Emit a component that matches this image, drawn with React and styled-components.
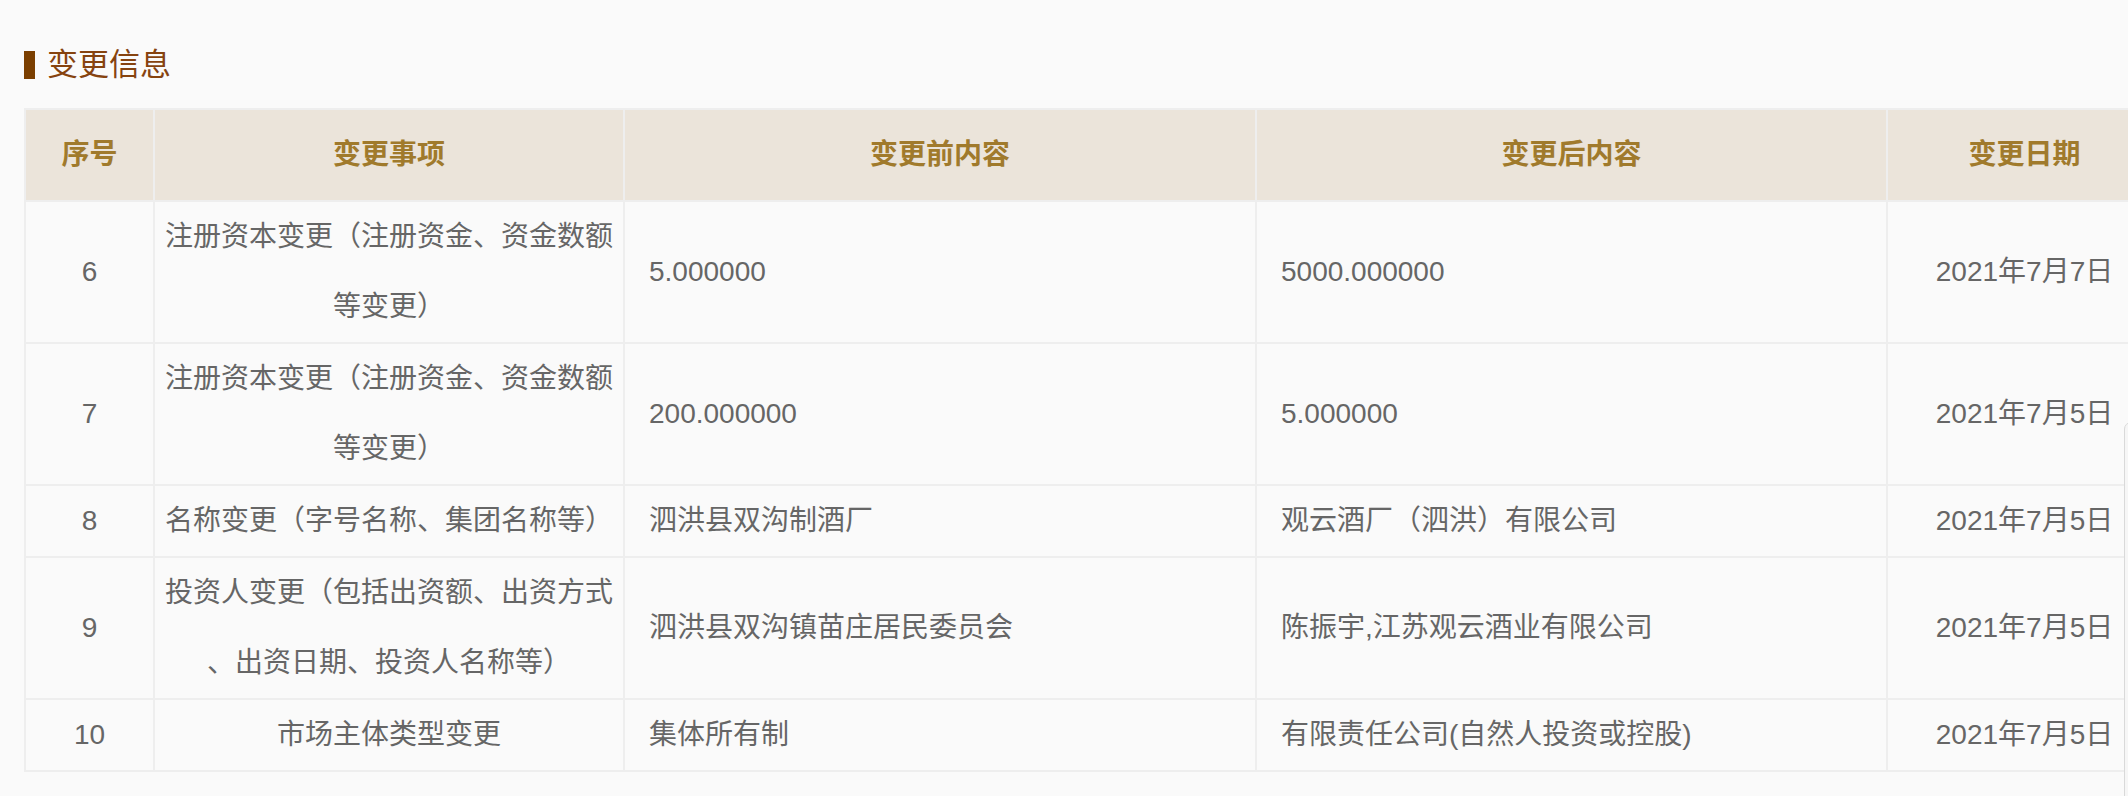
import React from 'react';
import styled, { createGlobalStyle } from 'styled-components';

const GlobalStyle = createGlobalStyle`
  html, body {
    margin: 0;
    padding: 0;
    background: #fafafa;
    overflow: hidden;
  }
  body {
    font-family: "Liberation Sans", "Noto Sans CJK SC", sans-serif;
  }
`;

const Page = styled.div`
  width: 2128px;
  height: 796px;
  overflow: hidden;
  box-sizing: border-box;
  padding: 50px 0 0 24px;
  background: #fafafa;
`;

const Title = styled.h2`
  display: flex;
  align-items: center;
  gap: 12px;
  margin: 0 0 29px;
  height: 29px;
  font-size: 31px;
  font-weight: normal;
  line-height: 29px;
  color: #86430f;
`;

const TitleBar = styled.span`
  display: block;
  width: 11px;
  height: 28px;
  background: #7b3f00;
`;

const Table = styled.table`
  width: 2137px;
  table-layout: fixed;
  border-collapse: collapse;
  border: 2px solid #eeeeee;
`;

const HeadCell = styled.th`
  height: 90px;
  padding: 0 10px;
  background: #ebe4da;
  border: 2px solid #eeeeee;
  font-size: 28px;
  font-weight: bold;
  color: #a07a2c;
  text-align: center;
  line-height: 40px;
`;

const Cell = styled.td`
  padding: ${p => (p.$align === 'left' ? '0 10px 0 24px' : '0 10px')};
  background: #fafafa;
  border: 2px solid #eeeeee;
  font-size: 28px;
  line-height: 70px;
  color: #666666;
  text-align: ${p => p.$align || 'center'};
  vertical-align: middle;
  line-break: anywhere;
`;

const ScrollEdge = styled.div`
  position: fixed;
  left: 2124px;
  top: 422px;
  bottom: -4px;
  width: 14px;
  box-sizing: border-box;
  background: #f6f6f6;
  border: 1px solid #d9d9d9;
  border-radius: 7px 0 0 0;
`;

const rows = [
  ['6', '注册资本变更（注册资金、资金数额等变更）', '5.000000', '5000.000000', '2021年7月7日'],
  ['7', '注册资本变更（注册资金、资金数额等变更）', '200.000000', '5.000000', '2021年7月5日'],
  ['8', '名称变更（字号名称、集团名称等）', '泗洪县双沟制酒厂', '观云酒厂（泗洪）有限公司', '2021年7月5日'],
  ['9', '投资人变更（包括出资额、出资方式、出资日期、投资人名称等）', '泗洪县双沟镇苗庄居民委员会', '陈振宇,江苏观云酒业有限公司', '2021年7月5日'],
  ['10', '市场主体类型变更', '集体所有制', '有限责任公司(自然人投资或控股)', '2021年7月5日'],
];

export default function App() {
  return (
    <>
      <GlobalStyle />
      <Page>
        <Title>
          <TitleBar />
          变更信息
        </Title>
        <Table>
          <colgroup>
            <col style={{ width: 129 }} />
            <col style={{ width: 470 }} />
            <col style={{ width: 632 }} />
            <col style={{ width: 631 }} />
            <col style={{ width: 275 }} />
          </colgroup>
          <thead>
            <tr>
              <HeadCell>序号</HeadCell>
              <HeadCell>变更事项</HeadCell>
              <HeadCell>变更前内容</HeadCell>
              <HeadCell>变更后内容</HeadCell>
              <HeadCell>变更日期</HeadCell>
            </tr>
          </thead>
          <tbody>
            {rows.map(r => (
              <tr key={r[0]}>
                <Cell>{r[0]}</Cell>
                <Cell>{r[1]}</Cell>
                <Cell $align="left">{r[2]}</Cell>
                <Cell $align="left">{r[3]}</Cell>
                <Cell>{r[4]}</Cell>
              </tr>
            ))}
          </tbody>
        </Table>
      </Page>
      <ScrollEdge />
    </>
  );
}
